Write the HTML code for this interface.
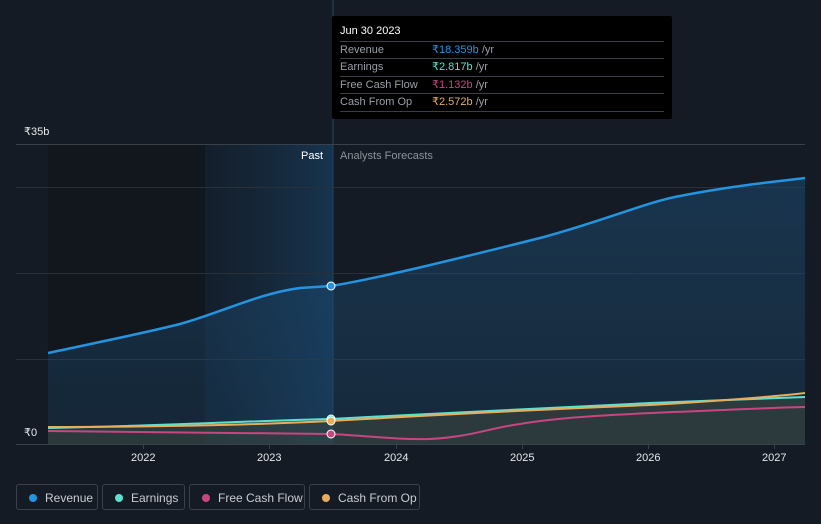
<!DOCTYPE html>
<html><head><meta charset="utf-8"><style>
body{margin:0;background:#151b24;font-family:"Liberation Sans",sans-serif;}
.wrap{position:relative;width:821px;height:524px;overflow:hidden;background:#151b24}
.tip{position:absolute;left:332px;top:16px;width:340px;height:103px;background:#000;border-radius:2px;font-size:11px}
.tip .h{position:absolute;left:8px;top:9px;color:#fff;font-size:11px}
.tip .r{position:absolute;left:8px;width:324px;height:17px;border-top:1px solid #3a3f47;color:#9a9ea6;line-height:17px}
.tip .r span{position:absolute;left:92px}
.tip .r i{font-style:normal;color:#9a9ea6}
.leg{position:absolute;top:484px;height:26px;border:1px solid #3a414c;border-radius:3px;color:#c9ccd1;font-size:12px;line-height:26px;box-sizing:border-box}
.leg b{position:absolute;left:12px;top:9px;width:8px;height:8px;border-radius:50%}
.leg span{position:absolute;left:28px}
.ax{position:absolute;top:452px;color:#e6e8eb;font-size:11px}
</style></head><body><div class="wrap">
<svg width="821" height="524" style="position:absolute;left:0;top:0">
<defs>
<linearGradient id="hl" x1="0" x2="1"><stop offset="0" stop-color="#16273a" stop-opacity="0.5"/><stop offset="1" stop-color="#17344f"/></linearGradient>
<linearGradient id="rf" x1="0" y1="0" x2="0" y2="1"><stop offset="0" stop-color="#1b4a70" stop-opacity="0.55"/><stop offset="1" stop-color="#1b4a70" stop-opacity="0.3"/></linearGradient>
</defs>
<rect x="48" y="144" width="285" height="300" fill="#12161d"/>
<rect x="205" y="144" width="128" height="300" fill="url(#hl)"/>
<line x1="333" y1="0" x2="333" y2="444" stroke="#1f4766" stroke-width="1"/>
<g stroke="#2a303a" stroke-width="1">
<line x1="16" y1="144.5" x2="805" y2="144.5" stroke="#3a404a"/>
<line x1="16" y1="187.5" x2="805" y2="187.5"/>
<line x1="16" y1="273.5" x2="805" y2="273.5"/>
<line x1="16" y1="359.5" x2="805" y2="359.5"/>
<line x1="16" y1="444.5" x2="805" y2="444.5" stroke="#3a404a"/>
</g>
<g stroke="#3a404a"><line x1="143.5" y1="444" x2="143.5" y2="449"/><line x1="269.5" y1="444" x2="269.5" y2="449"/><line x1="396.5" y1="444" x2="396.5" y2="449"/><line x1="522.5" y1="444" x2="522.5" y2="449"/><line x1="648.5" y1="444" x2="648.5" y2="449"/><line x1="774.5" y1="444" x2="774.5" y2="449"/></g>
<path d="M48,353 C90,344 140,334 180,324 C220,313 260,293 300,288 L331,286 C380,278 460,258 540,238 C600,222 650,201 680,196 C730,186 780,181 805,178 L805,444 L48,444 Z" fill="url(#rf)"/>
<path d="M48,428 L331,421 L500,411 L650,403 L805,397 L805,444 L48,444Z" fill="#3a4640" opacity="0.6"/>
<path d="M48,353 C90,344 140,334 180,324 C220,313 260,293 300,288 L331,286 C380,278 460,258 540,238 C600,222 650,201 680,196 C730,186 780,181 805,178" fill="none" stroke="#2394e0" stroke-width="2.5"/>
<path d="M48,428 C150,426 250,421 331,419 C420,414 500,410 650,403 C720,400 780,398 805,397" fill="none" stroke="#5ee0d0" stroke-width="2"/>
<path d="M48,427 C150,427 250,425 331,421 C420,416 500,411 650,405 C720,401 780,396 805,393" fill="none" stroke="#e8ad5a" stroke-width="2"/>
<path d="M48,431 C150,432 250,434 331,434 C370,436 400,440 430,439 C470,437 490,428 520,424 C560,417 620,414 700,411 C750,409 790,407 805,407" fill="none" stroke="#c8467f" stroke-width="2"/>
<circle cx="331" cy="286" r="4" fill="#2394e0" stroke="#fff" stroke-width="1"/>
<circle cx="331" cy="419" r="4" fill="#5ee0d0" stroke="#fff" stroke-width="1"/>
<circle cx="331" cy="421" r="4" fill="#e8ad5a" stroke="#fff" stroke-width="1"/>
<circle cx="331" cy="434" r="4" fill="#c8467f" stroke="#fff" stroke-width="1"/>
</svg>
<div style="position:absolute;left:24px;top:125px;color:#e6e8eb;font-size:11px">₹35b</div>
<div style="position:absolute;left:24px;top:426px;color:#e6e8eb;font-size:11px">₹0</div>
<div style="position:absolute;left:301px;top:150px;color:#fff;font-size:11px">Past</div>
<div style="position:absolute;left:340px;top:150px;color:#8d929a;font-size:11px">Analysts Forecasts</div>
<div class="ax" style="left:131px">2022</div><div class="ax" style="left:257px">2023</div><div class="ax" style="left:384px">2024</div><div class="ax" style="left:510px">2025</div><div class="ax" style="left:636px">2026</div><div class="ax" style="left:762px">2027</div>
<div class="tip"><div class="h">Jun 30 2023</div>
<div class="r" style="top:25px">Revenue<span><i style="color:#2394e0">₹18.359b</i> /yr</span></div>
<div class="r" style="top:42px">Earnings<span><i style="color:#5ee0d0">₹2.817b</i> /yr</span></div>
<div class="r" style="top:60px">Free Cash Flow<span><i style="color:#c8467f">₹1.132b</i> /yr</span></div>
<div class="r" style="top:77px;border-bottom:1px solid #3a3f47">Cash From Op<span><i style="color:#e8ad5a">₹2.572b</i> /yr</span></div>
</div>
<div class="leg" style="left:16px;width:82px"><b style="background:#2394e0"></b><span>Revenue</span></div>
<div class="leg" style="left:102px;width:83px"><b style="background:#5ee0d0"></b><span>Earnings</span></div>
<div class="leg" style="left:189px;width:116px"><b style="background:#c8467f"></b><span>Free Cash Flow</span></div>
<div class="leg" style="left:309px;width:111px"><b style="background:#e8ad5a"></b><span>Cash From Op</span></div>
</div></body></html>
